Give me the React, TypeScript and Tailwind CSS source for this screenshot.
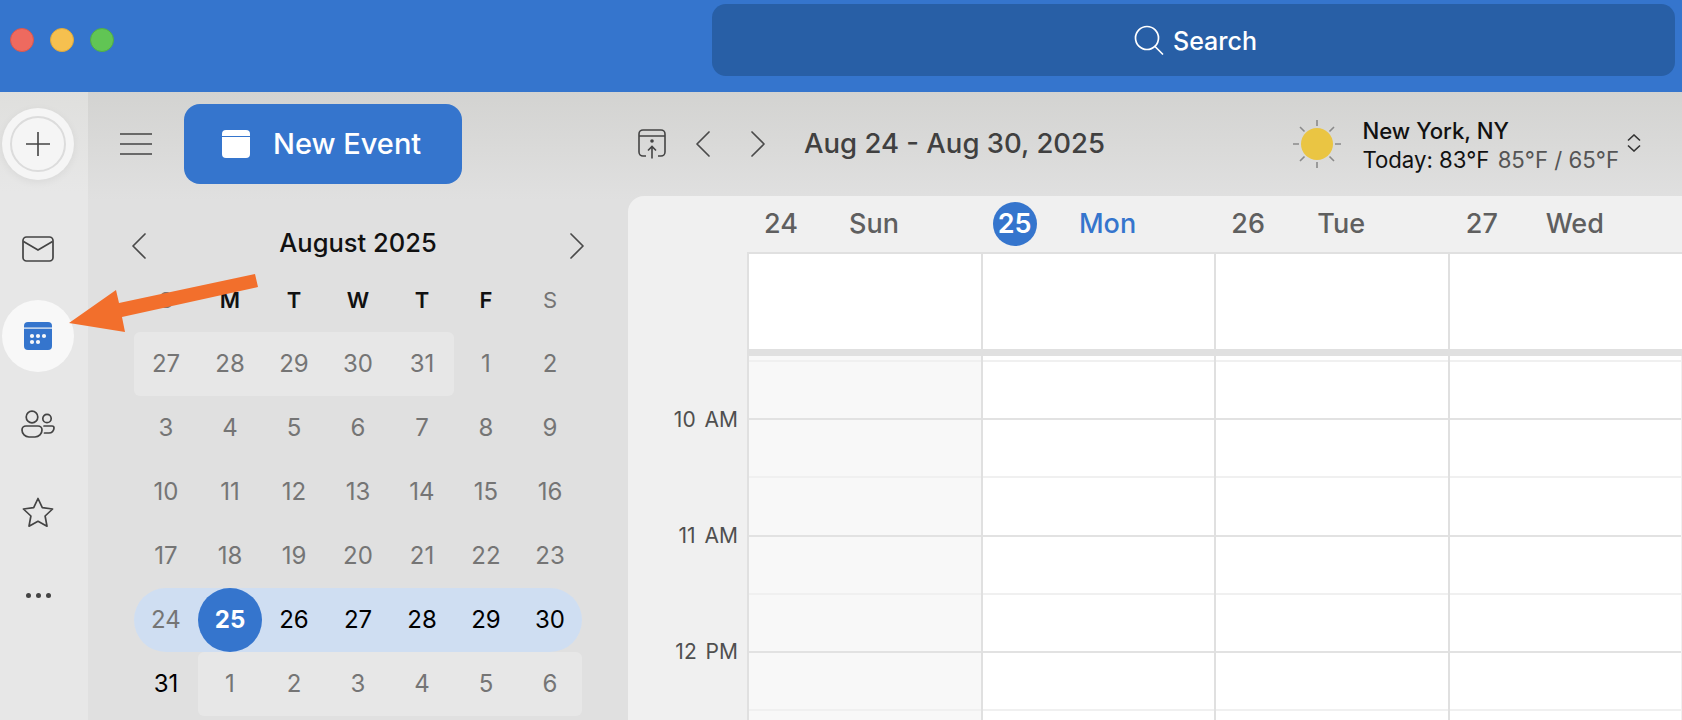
import React from 'react'

const weekdays = ['S', 'M', 'T', 'W', 'T', 'F', 'S']

function DayCell({ children, className = '' }: { children: React.ReactNode; className?: string }) {
  return (
    <div className={`w-16 h-16 flex items-center justify-center text-[24px] ${className}`}>{children}</div>
  )
}

function Chevron({ dir, className = '' }: { dir: 'left' | 'right'; className?: string }) {
  return (
    <svg width="14" height="26" viewBox="0 0 14 26" fill="none" className={className}>
      <path
        d={dir === 'left' ? 'M13 1 1 13l12 12' : 'M1 1l12 12L1 25'}
        stroke="#4a4a4a"
        strokeWidth="1.7"
        strokeLinecap="round"
        strokeLinejoin="round"
      />
    </svg>
  )
}

function MiniCalendar() {
  const grayRow = (days: number[]) =>
    days.map((d) => (
      <DayCell key={d} className="text-[#757575]">
        {d}
      </DayCell>
    ))

  return (
    <div className="ml-[46px] w-[448px]">
      <div className="mt-9 h-[46px] flex items-center justify-between">
        <Chevron dir="left" className="-ml-[2px] mt-[6px]" />
        <span className="text-[25.500px] font-medium text-[#111111] mt-[1px]">August 2025</span>
        <Chevron dir="right" className="-mr-[2px] mt-[6px]" />
      </div>

      <div className="mt-[2px] flex h-16">
        {weekdays.map((d, i) => (
          <DayCell
            key={i}
            className={`!text-[22px] font-semibold ${i === 0 || i === 6 ? 'text-[#757575] !font-normal' : 'text-[#111111]'}`}
          >
            {d}
          </DayCell>
        ))}
      </div>

      <div className="flex">
        <div className="flex bg-[#e7e7e7] rounded-md">{grayRow([27, 28, 29, 30, 31])}</div>
        <DayCell className="text-[#757575]">1</DayCell>
        <DayCell className="text-[#757575]">2</DayCell>
      </div>
      <div className="flex">{grayRow([3, 4, 5, 6, 7, 8, 9])}</div>
      <div className="flex">{grayRow([10, 11, 12, 13, 14, 15, 16])}</div>
      <div className="flex">{grayRow([17, 18, 19, 20, 21, 22, 23])}</div>
      <div className="flex bg-[#cfdef2] rounded-full">
        <DayCell className="text-[#757575]">24</DayCell>
        <DayCell className="bg-[#3575cd] rounded-full text-white font-bold">25</DayCell>
        {[26, 27, 28, 29, 30].map((d) => (
          <DayCell key={d} className="text-black">
            {d}
          </DayCell>
        ))}
      </div>
      <div className="flex">
        <DayCell className="text-black">31</DayCell>
        <div className="flex bg-[#e7e7e7] rounded-md">{grayRow([1, 2, 3, 4, 5, 6])}</div>
      </div>
    </div>
  )
}

function Rail() {
  return (
    <div className="w-[88px] shrink-0 flex flex-col items-center pt-4 pr-3 gap-4 bg-[linear-gradient(#dfdfdd,#e7e7e7_100px)]">
      <div className="w-[72px] h-[72px] mb-[17px] rounded-full bg-[#f5f5f5] shadow-[0_2px_8px_rgba(0,0,0,0.06)] flex items-center justify-center">
        <div className="w-14 h-14 rounded-full border-2 border-[#dcdcdc] flex items-center justify-center">
          <svg width="24" height="24" viewBox="0 0 24 24" fill="none">
            <path d="M12 0v24M0 12h24" stroke="#444444" strokeWidth="1.6" />
          </svg>
        </div>
      </div>

      <div className="h-[71px] flex items-center justify-center">
        <svg width="32" height="26" viewBox="0 0 32 26" fill="none">
          <rect x="1" y="1" width="30" height="24" rx="3.5" stroke="#444444" strokeWidth="1.7" />
          <path d="M1.5 5.5 16 14 30.5 5.5" stroke="#444444" strokeWidth="1.7" />
        </svg>
      </div>

      <div className="w-[72px] h-[72px] rounded-full bg-[#f8f8f8] flex items-center justify-center">
        <svg width="28" height="28" viewBox="0 0 28 28">
          <rect width="28" height="28" rx="4" fill="#3575cd" />
          <rect y="5.5" width="28" height="1.2" fill="#f8f8f8" />
          <circle cx="8" cy="14" r="2.1" fill="#f8f8f8" />
          <circle cx="14" cy="14" r="2.1" fill="#f8f8f8" />
          <circle cx="20" cy="14" r="2.1" fill="#f8f8f8" />
          <circle cx="8" cy="20" r="2.1" fill="#f8f8f8" />
          <circle cx="14" cy="20" r="2.1" fill="#f8f8f8" />
        </svg>
      </div>

      <div className="h-[72px] flex items-center justify-center">
        <svg width="34" height="28" viewBox="0 0 34 28" fill="none" stroke="#444444" strokeWidth="1.7">
          <circle cx="11" cy="7" r="5.8" />
          <path d="M5 16h12a4 4 0 0 1 4 4 7 7 0 0 1-7 7H8a7 7 0 0 1-7-7 4 4 0 0 1 4-4Z" />
          <circle cx="26" cy="8.5" r="4.2" />
          <path d="M23 16h8a2 2 0 0 1 2 2 5 5 0 0 1-5 5h-4.500" strokeLinecap="round" />
        </svg>
      </div>

      <div className="h-[72px] flex items-center justify-center">
        <svg width="32" height="31" viewBox="0 0 32 31" fill="none">
          <path
            d="M16 1.500 20.300 10.600 30.600 12 23.100 19 25 29.200 16 24.300 7 29.200 8.900 19 1.400 12 11.700 10.600Z"
            stroke="#444444"
            strokeWidth="1.7"
            strokeLinejoin="round"
          />
        </svg>
      </div>

      <div className="-mt-[5px] h-[72px] flex items-center justify-center gap-[5px]">
        <span className="w-[5px] h-[5px] rounded-full bg-[#444444]" />
        <span className="w-[5px] h-[5px] rounded-full bg-[#444444]" />
        <span className="w-[5px] h-[5px] rounded-full bg-[#444444]" />
      </div>
    </div>
  )
}

function Weather() {
  return (
    <div className="ml-auto mr-[41px] flex items-center">
      <svg width="48" height="48" viewBox="0 0 48 48" fill="none">
        <g stroke="#8a8a8a" strokeWidth="1.600">
          <path d="M24 0v6M24 42v6M0 24h6M42 24h6M7 7l4.500 4.500M41 7l-4.500 4.500M7 41l4.500-4.500M41 41l-4.500-4.500" />
        </g>
        <circle cx="24" cy="24" r="16" fill="#eac543" />
      </svg>
      <div className="ml-[21px] mt-[1px] text-[22.200px] leading-[29px] text-[#111111]">
        <div className="font-medium">New York, NY</div>
        <div>
          Today: 83°F <span className="ml-[2px] text-[#555555]">85°F / 65°F</span>
        </div>
      </div>
      <svg width="14" height="18" viewBox="0 0 14 18" fill="none" className="ml-2 -mt-[2px]">
        <path d="M1 6.500 7 1l6 5.500M1 11.500 7 17l6-5.500" stroke="#333333" strokeWidth="1.600" />
      </svg>
    </div>
  )
}

const days = [
  { num: '24', name: 'Sun' },
  { num: '25', name: 'Mon', today: true },
  { num: '26', name: 'Tue' },
  { num: '27', name: 'Wed' },
]

const hours = ['10 AM', '11 AM', '12 PM']

function WeekPanel() {
  return (
    <div className="flex-1 min-h-0 bg-[#f0f0f0] rounded-tl-2xl overflow-hidden">
      <div className="h-14 pl-[119px] flex items-center">
        {days.map((d) => (
          <div key={d.num} className="w-[233.600px] shrink-0 flex items-center text-[27px] font-medium text-[#5f5f5f]">
            {d.today ? (
              <div className="w-[68px] flex justify-center">
                <span className="w-11 h-11 rounded-full bg-[#3575cd] text-white font-semibold text-[27px] flex items-center justify-center">
                  {d.num}
                </span>
              </div>
            ) : (
              <span className="w-[68px] text-center">{d.num}</span>
            )}
            <span className={`w-[118px] text-center ${d.today ? 'text-[#3575cd]' : ''}`}>{d.name}</span>
          </div>
        ))}
      </div>

      <div className="flex h-[104px]">
        <div className="w-[119px] shrink-0" />
        <div className="flex-1 flex flex-col">
          <div className="h-[97px] flex bg-white border-t-2 border-[#e0e0e0]">
            {days.map((d) => (
              <div key={d.num} className="w-[233.600px] shrink-0 border-l-2 border-[#e0e0e0]" />
            ))}
          </div>
          <div className="h-[7px] bg-[#e0e0e0]" />
        </div>
      </div>

      <div className="flex">
        <div className="w-[119px] shrink-0 pt-[6px] pr-[9px]">
          {hours.map((h) => (
            <div
              key={h}
              className="h-[116px] flex items-center justify-end text-[21px] text-[#4f4f4f] [word-spacing:3px]"
            >
              {h}
            </div>
          ))}
        </div>
        {days.map((d, i) => (
          <div
            key={d.num}
            className={`w-[233.600px] shrink-0 border-l-2 border-[#e0e0e0] ${i === 0 ? 'bg-[#f8f8f8]' : 'bg-white'}`}
          >
            <div className="h-[6px] border-b-2 border-[#f0f0f0]" />
            {[0, 1, 2, 3, 4, 5, 6].map((n) => (
              <div
                key={n}
                className={`h-[58.2px] border-b-2 ${n % 2 === 0 ? 'border-[#e2e2e2]' : 'border-[#f0f0f0]'}`}
              />
            ))}
          </div>
        ))}
      </div>
    </div>
  )
}

export default function App() {
  return (
    <div className="relative w-[1682px] h-[720px] overflow-hidden flex flex-col [font-family:Inter,sans-serif]">
      {/* Title bar */}
      <div className="h-[92px] shrink-0 bg-[#3575cd] flex items-start">
        <div className="ml-[10px] mt-7 flex gap-4">
          <span className="w-6 h-6 rounded-full bg-[#ee6a5f] border border-[#d9574d]" />
          <span className="w-6 h-6 rounded-full bg-[#f6c04f] border border-[#e0a93a]" />
          <span className="w-6 h-6 rounded-full bg-[#61c554] border border-[#50ad45]" />
        </div>
        <div className="ml-auto mt-1 mr-[7px] w-[963px] h-[72px] rounded-[14px] bg-[#285fa6] flex items-center justify-center gap-[9px] pl-[4px]">
          <svg width="30" height="30" viewBox="0 0 30 30" fill="none">
            <circle cx="13" cy="13" r="11.500" stroke="white" strokeWidth="1.700" />
            <path d="M21 21.500 28.500 29" stroke="white" strokeWidth="1.700" strokeLinecap="round" />
          </svg>
          <span className="text-[25px] font-medium text-white mt-[3px]">Search</span>
        </div>
      </div>

      <div className="flex-1 min-h-0 flex">
        <Rail />

        <div className="flex-1 min-w-0 flex bg-[linear-gradient(#d3d3d1,#e0e0e0_108px)]">
          {/* Sidebar */}
          <div className="w-[540px] shrink-0">
            <div className="pt-3 pl-8 flex items-center">
              <svg width="32" height="24" viewBox="0 0 32 24" fill="none" className="-mt-[1px]">
                <path d="M0 2h32M0 12h32M0 22h32" stroke="#444444" strokeWidth="1.700" />
              </svg>
              <button className="ml-8 w-[278px] h-20 rounded-2xl bg-[#3575cd] flex items-center pl-[38px] gap-[23px]">
                <svg width="28" height="28" viewBox="0 0 28 28">
                  <rect width="28" height="28" rx="4" fill="white" />
                  <rect y="6" width="28" height="1" fill="#3575cd" />
                </svg>
                <span className="text-[29px] font-medium text-white">New Event</span>
              </button>
            </div>
            <MiniCalendar />
          </div>

          {/* Week view */}
          <div className="flex-1 min-w-0 flex flex-col">
            <div className="h-[104px] shrink-0 flex items-center pl-[10px]">
              <svg width="28" height="30" viewBox="0 0 28 30" fill="none" stroke="#444444" strokeWidth="1.600">
                <path d="M8 27H5a4 4 0 0 1-4-4V5a4 4 0 0 1 4-4h18a4 4 0 0 1 4 4v18a4 4 0 0 1-4 4h-3" />
                <path d="M1 7h26M14 29.500V18M10 21.500 14 17.500l4 4" />
                <circle cx="14" cy="12" r="1.800" fill="#444444" stroke="none" />
              </svg>
              <Chevron dir="left" className="ml-[30px]" />
              <Chevron dir="right" className="ml-[41px]" />
              <span className="ml-[39px] text-[27.500px] font-medium text-[#404040]">Aug 24 - Aug 30, 2025</span>
              <Weather />
            </div>
            <WeekPanel />
          </div>
        </div>
      </div>

      {/* Annotation arrow */}
      <svg
        width="200"
        height="70"
        viewBox="0 0 200 70"
        className="absolute left-[66px] top-[270px]"
      >
        <polygon points="3,53 50,20 53,33 189,4 192,17 56,47 59,62" fill="#f26f2c" />
      </svg>
    </div>
  )
}
